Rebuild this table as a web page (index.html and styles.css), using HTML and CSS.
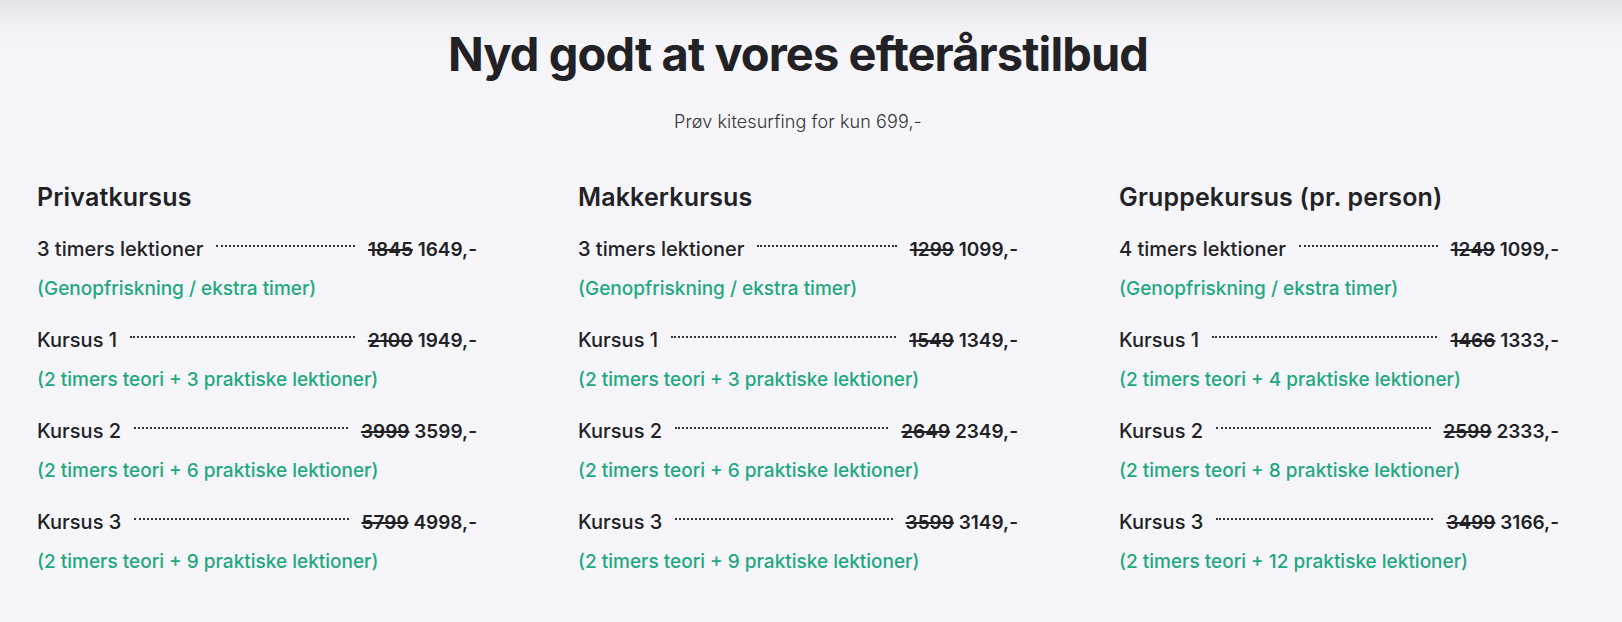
FILE: index.html
```html
<!DOCTYPE html>
<html lang="da">
<head>
<meta charset="utf-8">
<title>Efterårstilbud</title>
<link rel="stylesheet" href="styles.css">
</head>
<body>
<section class="offer">
  <h1 class="offer-title">Nyd godt at vores efterårstilbud</h1>
  <p class="offer-lead">Prøv kitesurfing for kun 699,-</p>
  <div class="columns">
    <div class="col">
      <h2 class="col-title">Privatkursus</h2>
      <ul class="list">
        <li class="item"><div class="row"><span class="name">3 timers lektioner</span><span class="dots"></span><span class="price"><s>1845</s> 1649,-</span></div><div class="note">(Genopfriskning / ekstra timer)</div></li>
        <li class="item"><div class="row"><span class="name">Kursus 1</span><span class="dots"></span><span class="price"><s>2100</s> 1949,-</span></div><div class="note">(2 timers teori + 3 praktiske lektioner)</div></li>
        <li class="item"><div class="row"><span class="name">Kursus 2</span><span class="dots"></span><span class="price"><s>3999</s> 3599,-</span></div><div class="note">(2 timers teori + 6 praktiske lektioner)</div></li>
        <li class="item"><div class="row"><span class="name">Kursus 3</span><span class="dots"></span><span class="price"><s>5799</s> 4998,-</span></div><div class="note">(2 timers teori + 9 praktiske lektioner)</div></li>
      </ul>
    </div>
    <div class="col">
      <h2 class="col-title">Makkerkursus</h2>
      <ul class="list">
        <li class="item"><div class="row"><span class="name">3 timers lektioner</span><span class="dots"></span><span class="price"><s>1299</s> 1099,-</span></div><div class="note">(Genopfriskning / ekstra timer)</div></li>
        <li class="item"><div class="row"><span class="name">Kursus 1</span><span class="dots"></span><span class="price"><s>1549</s> 1349,-</span></div><div class="note">(2 timers teori + 3 praktiske lektioner)</div></li>
        <li class="item"><div class="row"><span class="name">Kursus 2</span><span class="dots"></span><span class="price"><s>2649</s> 2349,-</span></div><div class="note">(2 timers teori + 6 praktiske lektioner)</div></li>
        <li class="item"><div class="row"><span class="name">Kursus 3</span><span class="dots"></span><span class="price"><s>3599</s> 3149,-</span></div><div class="note">(2 timers teori + 9 praktiske lektioner)</div></li>
      </ul>
    </div>
    <div class="col">
      <h2 class="col-title">Gruppekursus (pr. person)</h2>
      <ul class="list">
        <li class="item"><div class="row"><span class="name">4 timers lektioner</span><span class="dots"></span><span class="price"><s>1249</s> 1099,-</span></div><div class="note">(Genopfriskning / ekstra timer)</div></li>
        <li class="item"><div class="row"><span class="name">Kursus 1</span><span class="dots"></span><span class="price"><s>1466</s> 1333,-</span></div><div class="note">(2 timers teori + 4 praktiske lektioner)</div></li>
        <li class="item"><div class="row"><span class="name">Kursus 2</span><span class="dots"></span><span class="price"><s>2599</s> 2333,-</span></div><div class="note">(2 timers teori + 8 praktiske lektioner)</div></li>
        <li class="item"><div class="row"><span class="name">Kursus 3</span><span class="dots"></span><span class="price"><s>3499</s> 3166,-</span></div><div class="note">(2 timers teori + 12 praktiske lektioner)</div></li>
      </ul>
    </div>
  </div>
</section>
</body>
</html>
```
FILE: styles.css
```css
* { box-sizing: border-box; }
html, body { margin: 0; padding: 0; }
body {
  background: #f6f6fa;
  font-family: Inter, "Noto Sans", sans-serif;
  color: #222226;
  min-height: 622px;
}
.offer {
  background: linear-gradient(to bottom, #e4e4e8 0px, #f0f0f4 22px, #f6f6fa 48px, #f6f6fa 100%);
  padding: 25px 63px 40px 37px;
}
.offer-title {
  margin: 0;
  text-align: center;
  font-size: 47px;
  line-height: 58px;
  font-weight: 700;
  letter-spacing: -0.9px;
}
.offer-lead {
  margin: 25px 0 0;
  text-align: center;
  font-size: 18px;
  line-height: 27px;
  font-weight: 300;
  letter-spacing: 0.1px;
  color: #333338;
}
.columns {
  margin-top: 46px;
  display: grid;
  grid-template-columns: repeat(3, 1fr);
  column-gap: 101px;
}
.col-title {
  margin: 0 0 16px;
  font-size: 25px;
  line-height: 32px;
  font-weight: 600;
  letter-spacing: 0.15px;
}
.list {
  list-style: none;
  margin: 0;
  padding: 0;
}
.item {
  margin: 0 0 11px;
}
.row {
  display: flex;
  align-items: center;
  height: 40px;
  font-size: 20px;
  font-weight: 500;
}
.name { white-space: nowrap; }
.dots {
  flex: 1;
  margin: -6px 13px 0;
  border-top: 2px dotted #333;
}
.price {
  white-space: nowrap;
  font-size: 19px;
  font-weight: 600;
}
.price s {
  text-decoration-thickness: 2px;
}
.note {
  height: 40px;
  line-height: 40px;
  font-size: 19px;
  font-weight: 450;
  color: #22a880;
}
```
